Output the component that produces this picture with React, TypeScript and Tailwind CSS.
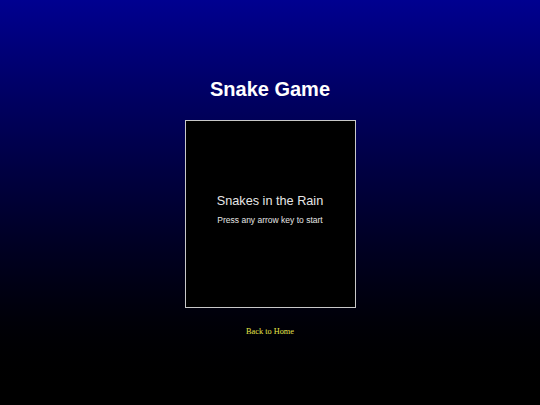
import React from 'react';

const App: React.FC = () => {
  return (
    <div className="min-h-screen w-full bg-gradient-to-b from-[#000090] to-[#000000] flex flex-col items-center pt-[78px] font-['Liberation_Sans',Arial,sans-serif]">
      <h1 className="text-[20px] leading-[23px] font-bold text-white">Snake Game</h1>

      <div className="mt-[19px] w-[171px] h-[188px] border border-[#c8c8c8] bg-black flex flex-col items-center pt-[73px]">
        <h2 className="text-[12.7px] leading-[15px] text-[#e6e6e6]">Snakes in the Rain</h2>
        <p className="mt-[6px] text-[8.5px] leading-[10px] text-[#e6e6e6]">Press any arrow key to start</p>
      </div>

      <a
        href="#"
        className="mt-[19px] text-[8.3px] leading-[10px] text-[#e6e64a] font-['Liberation_Serif','Times_New_Roman',serif]"
      >
        Back to Home
      </a>
    </div>
  );
};

export default App;
